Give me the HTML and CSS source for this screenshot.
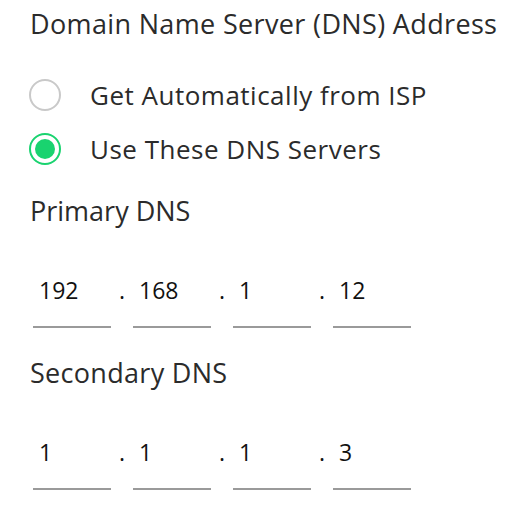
FILE: index.html
```html
<!DOCTYPE html>
<html>
<head>
<meta charset="utf-8">
<link rel="stylesheet" href="styles.css">
</head>
<body>
<div class="panel">
  <h1 class="title">Domain Name Server (DNS) Address</h1>
  <div class="radios">
    <label class="radio"><span class="dot"></span><span class="rlabel">Get Automatically from ISP</span></label>
    <label class="radio checked"><span class="dot"></span><span class="rlabel">Use These DNS Servers</span></label>
  </div>
  <div class="label primary">Primary DNS</div>
  <div class="ip">
    <span class="field">192</span><span class="sep">.</span>
    <span class="field">168</span><span class="sep">.</span>
    <span class="field">1</span><span class="sep">.</span>
    <span class="field">12</span>
  </div>
  <div class="label secondary">Secondary DNS</div>
  <div class="ip">
    <span class="field">1</span><span class="sep">.</span>
    <span class="field">1</span><span class="sep">.</span>
    <span class="field">1</span><span class="sep">.</span>
    <span class="field">3</span>
  </div>
</div>
</body>
</html>
```
FILE: styles.css
```css
html, body {
  margin: 0;
  padding: 0;
  background: #fff;
}
body {
  font-family: "Open Sans", "Noto Sans", sans-serif;
  color: #2b2b2b;
}
.panel {
  padding: 6px 0 0 30px;
  display: flex;
  flex-direction: column;
}
.title {
  margin: 0;
  font-weight: 400;
  font-size: 27px;
  letter-spacing: 0.35px;
  line-height: 36px;
}
.radios {
  display: flex;
  flex-direction: column;
  gap: 22px;
  margin-top: 37px;
  margin-left: -1px;
}
.radio {
  display: flex;
  align-items: center;
  gap: 29px;
  height: 32px;
  font-size: 26px;
  letter-spacing: 0.5px;
}
.dot {
  width: 32px;
  height: 32px;
  box-sizing: border-box;
  border-radius: 50%;
  border: 2px solid #c9c9c9;
  background: #fff;
  flex: none;
  position: relative;
}
.checked .dot {
  border-color: #19d36f;
}
.checked .dot::after {
  content: "";
  position: absolute;
  left: 4px;
  top: 4px;
  width: 20px;
  height: 20px;
  border-radius: 50%;
  background: #19d36f;
}
.label {
  font-size: 27px;
  line-height: 36px;
}
.primary {
  margin-top: 28px;
}
.secondary {
  margin-top: 27px;
  letter-spacing: 0.3px;
}
.ip {
  display: flex;
  align-items: flex-start;
  margin-top: 47px;
  margin-left: 3px;
  font-size: 23px;
  color: #111;
}
.field {
  width: 78px;
  box-sizing: border-box;
  padding-left: 6px;
  height: 52px;
  line-height: 28px;
  border-bottom: 2px solid #9a9a9a;
}
.sep {
  width: 22px;
  text-align: center;
  line-height: 28px;
}
```
